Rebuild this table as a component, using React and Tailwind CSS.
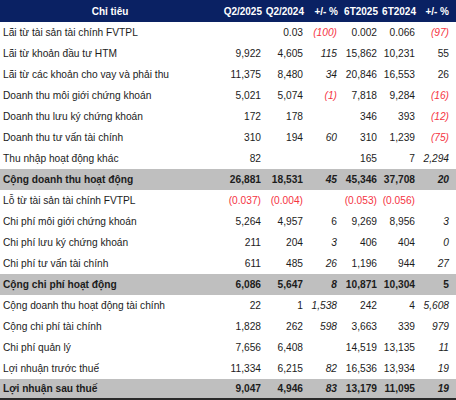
const headers = ["Chỉ tiêu", "Q2/2025", "Q2/2024", "+/- %", "6T2025", "6T2024", "+/- %"];

// [label, values, italic flags for the two +/- % columns, total row]
const rows = [
  ["Lãi từ tài sản tài chính FVTPL", ["", "0.03", "(100)", "0.002", "0.066", "(97)"], [1, 1]],
  ["Lãi từ khoản đầu tư HTM", ["9,922", "4,605", "115", "15,862", "10,231", "55"], [1, 0]],
  ["Lãi từ các khoản cho vay và phải thu", ["11,375", "8,480", "34", "20,846", "16,553", "26"], [1, 0]],
  ["Doanh thu môi giới chứng khoán", ["5,021", "5,074", "(1)", "7,818", "9,284", "(16)"], [1, 1]],
  ["Doanh thu lưu ký chứng khoán", ["172", "178", "", "346", "393", "(12)"], [1, 1]],
  ["Doanh thu tư vấn tài chính", ["310", "194", "60", "310", "1,239", "(75)"], [1, 1]],
  ["Thu nhập hoạt động khác", ["82", "", "", "165", "7", "2,294"], [1, 1]],
  ["Cộng doanh thu hoạt động", ["26,881", "18,531", "45", "45,346", "37,708", "20"], [1, 1], true],
  ["Lỗ từ tài sản tài chính FVTPL", ["(0.037)", "(0.004)", "", "(0.053)", "(0.056)", ""], [0, 0]],
  ["Chi phí môi giới chứng khoán", ["5,264", "4,957", "6", "9,269", "8,956", "3"], [0, 1]],
  ["Chi phí lưu ký chứng khoán", ["211", "204", "3", "406", "404", "0"], [1, 1]],
  ["Chi phí tư vấn tài chính", ["611", "485", "26", "1,196", "944", "27"], [1, 1]],
  ["Cộng chi phí hoạt động", ["6,086", "5,647", "8", "10,871", "10,304", "5"], [1, 0], true],
  ["Cộng doanh thu hoạt động tài chính", ["22", "1", "1,538", "242", "4", "5,608"], [1, 1]],
  ["Cộng chi phí tài chính", ["1,828", "262", "598", "3,663", "339", "979"], [1, 1]],
  ["Chi phí quản lý", ["7,656", "6,408", "", "14,519", "13,135", "11"], [1, 1]],
  ["Lợi nhuận trước thuế", ["11,334", "6,215", "82", "16,536", "13,934", "19"], [1, 1]],
  ["Lợi nhuận sau thuế", ["9,047", "4,946", "83", "13,179", "11,095", "19"], [1, 1], true],
];

const grid = "grid grid-cols-[220px_44px_42px_34px_40px_38px_38px]";

export default function App() {
  return (
    <div
      className="w-[456px] h-[400px] bg-white text-[10.2px] text-[#1c1c1c] overflow-hidden"
      style={{ fontFamily: '"Liberation Sans", Arial, sans-serif' }}
    >
      {/* header */}
      <div className={`${grid} h-[22px] bg-[#0a2163] text-white font-bold text-[10px]`}>
        {headers.map((h, i) => (
          <div
            key={i}
            className={`flex items-center ${
              i === 0 ? "justify-center" : i === 6 ? "justify-end pr-[7px]" : "justify-end pr-[2px]"
            }`}
          >
            {h}
          </div>
        ))}
      </div>

      {rows.map(([label, vals, ital, total], r) => (
        <div
          key={r}
          className={`${grid} h-[21px] ${total ? "bg-[#bfbfbf] font-bold" : ""} ${
            r === rows.length - 1 ? "border-b-2 border-[#2a2a2a]" : ""
          }`}
        >
          <div className="flex items-center pl-[3px] whitespace-nowrap">{label}</div>
          {vals.map((v, i) => {
            const isPct = i === 2 || i === 5;
            const italic = isPct && ital[i === 2 ? 0 : 1];
            const red = v.startsWith("(");
            return (
              <div
                key={i}
                className={`flex items-center justify-end ${i === 5 ? "pr-[7px]" : "pr-[3px]"} ${
                  italic ? "italic" : ""
                } ${red ? "text-[#f5333f]" : ""}`}
              >
                {v}
              </div>
            );
          })}
        </div>
      ))}
    </div>
  );
}
